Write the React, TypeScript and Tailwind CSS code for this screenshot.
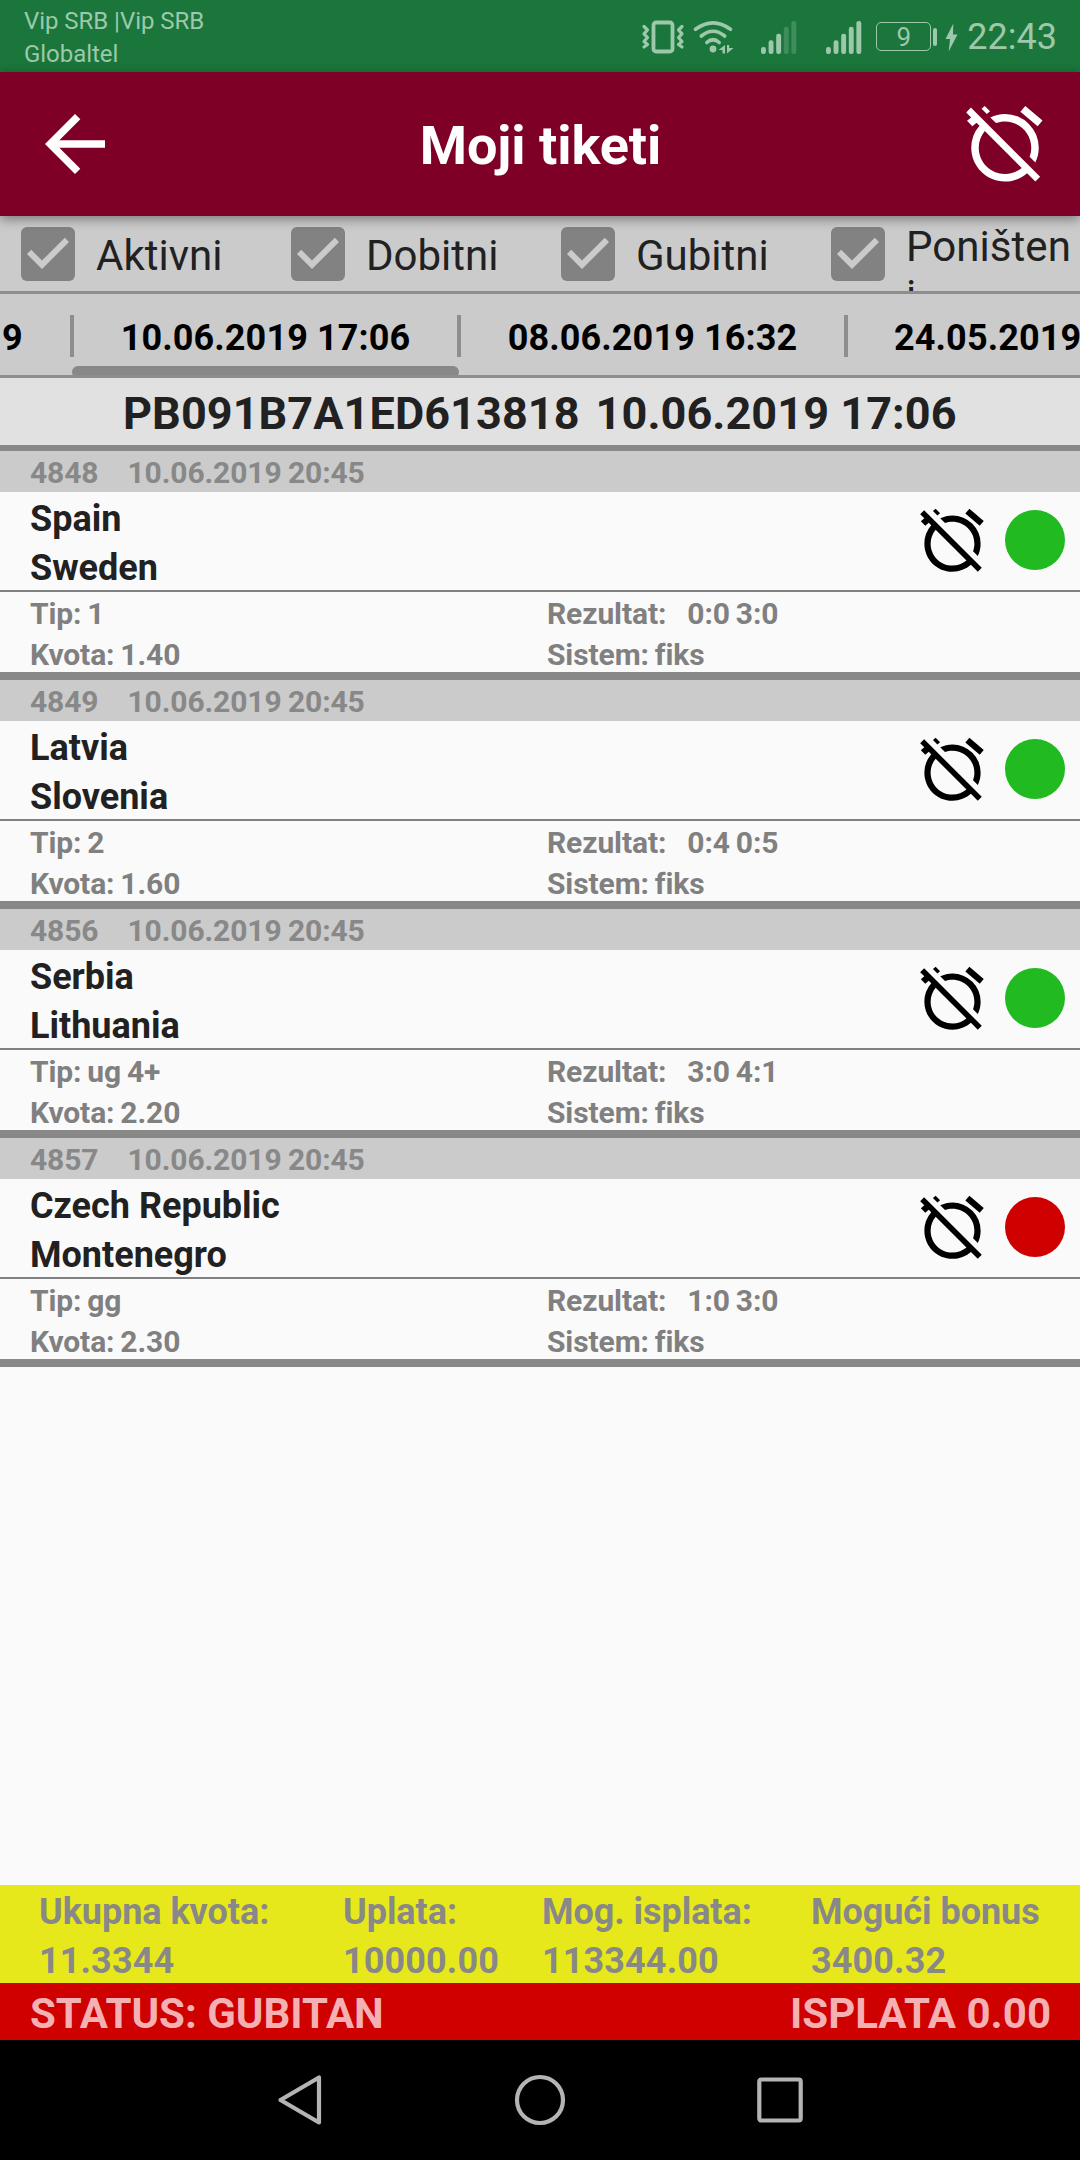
import { MdAlarmOff, MdArrowBack } from 'react-icons/md';

type Match = {
  code: string;
  home: string;
  away: string;
  tip: string;
  odds: string;
  result: string;
  won: boolean;
};

const matches: Match[] = [
  { code: '4848', home: 'Spain', away: 'Sweden', tip: '1', odds: '1.40', result: '0:0 3:0', won: true },
  { code: '4849', home: 'Latvia', away: 'Slovenia', tip: '2', odds: '1.60', result: '0:4 0:5', won: true },
  { code: '4856', home: 'Serbia', away: 'Lithuania', tip: 'ug 4+', odds: '2.20', result: '3:0 4:1', won: true },
  { code: '4857', home: 'Czech Republic', away: 'Montenegro', tip: 'gg', odds: '2.30', result: '1:0 3:0', won: false },
];

function VibrateIcon() {
  return (
    <svg width="44" height="36" viewBox="0 0 44 36" fill="none" stroke="currentColor">
      <rect x="12.5" y="3.5" width="19" height="29" rx="2.5" strokeWidth="3.8" />
      <path d="M3 7.500 6.500 11 3 14.800 6.500 18.500 3 22.500 6.500 25.500 3 28" strokeWidth="3.200" strokeLinecap="round" strokeLinejoin="round" />
      <path d="M41 7.500 37.500 11 41 14.800 37.500 18.500 41 22.500 37.500 25.500 41 28" strokeWidth="3.200" strokeLinecap="round" strokeLinejoin="round" />
    </svg>
  );
}

function WifiIcon() {
  return (
    <svg width="44" height="36" viewBox="0 0 44 36" fill="none" stroke="currentColor" strokeWidth="3.6" strokeLinecap="round">
      <path d="M3.500 10.300Q21 -2.500 38.500 10.300" />
      <path d="M9.300 17Q21 7.500 32.700 17" />
      <path d="M14.800 23.500Q21 18 27.200 23.500" />
      <circle cx="21" cy="30" r="3.400" fill="currentColor" stroke="none" />
      <path d="M33 26v8.500h-2.500V31H26.500zM35 34.500V26h2.200v3H41.500z" fill="currentColor" stroke="none" />
    </svg>
  );
}

function SignalIcon({ strength }: { strength: number }) {
  const tops = [28, 21.3, 14.7, 7.7, 2];
  return (
    <svg width="38" height="36" viewBox="0 0 38 36" fill="currentColor">
      {tops.map((top, i) => (
        <rect key={top} x={1 + i * 7.6} y={top} width="4.9" height={35 - top} rx="2.2" opacity={i < strength ? 1 : 0.28} />
      ))}
    </svg>
  );
}

function BatteryIcon() {
  return (
    <div className="flex items-center">
      <div className="flex h-[29px] w-[55px] items-center justify-center rounded-[5px] border-[1.5px] border-[#9dc8ab] text-[26px] leading-none">
        9
      </div>
      <div className="ml-[2px] h-[18px] w-[4px] rounded-full bg-[#9dc8ab]" />
    </div>
  );
}

function StatusBar() {
  return (
    <div className="flex h-[72px] bg-[#1a763b] pr-[23px] pl-[24px] text-[#9dc8ab]">
      <div className="pt-[5px] text-[24px] leading-[33px] tracking-[-0.050px]">
        Vip SRB |Vip SRB
        <br />
        Globaltel
      </div>
      <div className="ml-auto flex h-[73px] items-center">
        <VibrateIcon />
        <div className="ml-[7px]">
          <WifiIcon />
        </div>
        <div className="ml-[24px]">
          <SignalIcon strength={3} />
        </div>
        <div className="ml-[27px]">
          <SignalIcon strength={5} />
        </div>
        <div className="ml-[13px]">
          <BatteryIcon />
        </div>
        <svg className="ml-[7px]" width="16" height="30" viewBox="0 0 16 30" fill="currentColor">
          <path d="M9.300 1.500 1.500 17H6L4.700 29.500 13.500 12.500H9z" />
        </svg>
        <div className="ml-[7px] pt-px text-[36px] leading-[42px]">22:43</div>
      </div>
    </div>
  );
}

function Header() {
  return (
    <header className="relative z-10 flex h-[144px] items-center justify-between bg-[#7f0027] px-[30px] text-white shadow-[0_3px_11px_rgba(0,0,0,0.42)]">
      <MdArrowBack size={90} />
      <h1 className="pt-[2px] pl-px text-[54px] leading-[63px] font-bold tracking-[-0.050px]">Moji tiketi</h1>
      <MdAlarmOff size={90} />
    </header>
  );
}

function Filter({ label, wrapped }: { label: string; wrapped?: boolean }) {
  return (
    <div className="flex h-full w-[270px] overflow-hidden pl-[21px]">
      <div className="mt-[11px] flex h-[54px] w-[54px] shrink-0 rounded-[6px] bg-[#828282]">
        <svg width="54" height="54" viewBox="0 0 18 18" fill="#cbcbcb">
          <path d="M7 14 2 9l1.410-1.410L7 11.170l7.590-7.590L16 5z" />
        </svg>
      </div>
      <div
        className={
          wrapped
            ? 'ml-[21px] w-[168px] pt-[6px] text-[42px] leading-[49px] tracking-[0.060px] break-all text-[#212121]'
            : 'ml-[21px] pt-[15px] text-[42px] leading-[49px] text-[#212121]'
        }
      >
        {label}
      </div>
    </div>
  );
}

function Divider() {
  return <div className="-mx-[2px] mt-[21px] h-[42px] w-[4px] shrink-0 bg-[#8e8e8e]" />;
}

function DateTabs() {
  return (
    <div className="flex h-[84px] overflow-hidden border-b-[3px] border-[#8e8e8e] bg-[#cbcbcb] text-[36px] leading-[88px] font-bold tracking-[0.120px] whitespace-nowrap text-black">
      <div className="w-[72px] shrink-0 pl-[2px]">9</div>
      <Divider />
      <div className="relative w-[387px] shrink-0 text-center">
        10.06.2019 17:06
        <div className="absolute top-[72px] left-0 h-[12px] w-full rounded-[6px] bg-black/33" />
      </div>
      <Divider />
      <div className="w-[387px] shrink-0 text-center">08.06.2019 16:32</div>
      <Divider />
      <div className="shrink-0 pl-[48px]">24.05.2019</div>
    </div>
  );
}

function MatchRow({ match }: { match: Match }) {
  return (
    <div className="h-[229px] border-b-[8px] border-[#888888] font-bold">
      <div className="flex h-[41px] gap-[29px] bg-[#cbcbcb] pt-px pl-[30px] text-[30px] leading-[41px] tracking-[-0.100px] [word-spacing:-1px] text-[#888888]">
        <span>{match.code}</span>
        <span>10.06.2019 20:45</span>
      </div>
      <div className="flex h-[98px] items-center pr-[15px] pl-[30px]">
        <div className="h-[98px] grow pt-[3px] text-[36px] leading-[49px] text-[#212121]">
          <div>{match.home}</div>
          <div>{match.away}</div>
        </div>
        <div className="flex items-center pb-[2px]">
          <MdAlarmOff size={75} color="#000000" />
          <div className={match.won ? 'ml-[15px] size-[60px] rounded-full bg-[#21bb21]' : 'ml-[15px] size-[60px] rounded-full bg-[#ce0000]'} />
        </div>
      </div>
      <div className="grid h-[82px] grid-cols-[517px_1fr] border-t-2 border-[#808080] pt-px pl-[30px] text-[30px] leading-[41px] tracking-[-0.100px] [word-spacing:-1.500px] text-[#808080]">
        <div>
          <div>Tip: {match.tip}</div>
          <div>Kvota: {match.odds}</div>
        </div>
        <div>
          <div className="flex gap-[21px]">
            <span>Rezultat:</span>
            <span>{match.result}</span>
          </div>
          <div>Sistem: fiks</div>
        </div>
      </div>
    </div>
  );
}

function Total({ label, value }: { label: string; value: string }) {
  return (
    <div>
      <div className="tracking-[-0.050px]">{label}</div>
      <div className="tracking-[0.120px]">{value}</div>
    </div>
  );
}

function NavBar() {
  return (
    <div className="flex h-[120px] items-center justify-center gap-[180px] bg-black">
      <svg width="60" height="60" viewBox="0 0 60 60" fill="none" stroke="#b4b4b4" strokeWidth="4.200" strokeLinejoin="round">
        <path d="M49 7.500V52.500L10.500 30z" />
      </svg>
      <svg width="60" height="60" viewBox="0 0 60 60" fill="none" stroke="#b4b4b4" strokeWidth="4.200">
        <circle cx="30" cy="30" r="23" />
      </svg>
      <svg width="60" height="60" viewBox="0 0 60 60" fill="none" stroke="#b4b4b4" strokeWidth="4.200">
        <rect x="9.300" y="9.500" width="41.400" height="41" rx="2" />
      </svg>
    </div>
  );
}

export default function App() {
  return (
    <div className="flex h-[2160px] w-[1080px] flex-col overflow-hidden bg-[#fafafa] font-[Roboto,sans-serif]">
      <StatusBar />
      <Header />
      <div className="flex h-[78px] border-b-[3px] border-[#8e8e8e] bg-[#cbcbcb]">
        <Filter label="Aktivni" />
        <Filter label="Dobitni" />
        <Filter label="Gubitni" />
        <Filter label="Poništeni" wrapped />
      </div>
      <DateTabs />
      <div className="flex h-[73px] gap-[16px] border-b-[6px] border-[#888888] bg-[#e1e1e1] pt-[2px] pl-[123px] text-[45px] leading-[67px] font-bold tracking-[0.080px] text-[#212121]">
        <span>PB091B7A1ED613818</span>
        <span>10.06.2019 17:06</span>
      </div>
      <main className="grow">
        {matches.map((match) => (
          <MatchRow key={match.code} match={match} />
        ))}
      </main>
      <div className="grid h-[98px] grid-cols-[304px_199px_269px_1fr] bg-[#e7e81b] pt-[3px] pl-[39px] text-[36px] leading-[49px] font-bold text-[#888888]">
        <Total label="Ukupna kvota:" value="11.3344" />
        <Total label="Uplata:" value="10000.00" />
        <Total label="Mog. isplata:" value="113344.00" />
        <Total label="Mogući bonus" value="3400.32" />
      </div>
      <div className="flex h-[57px] justify-between bg-[#ce0000] pt-[2px] pr-[29px] pl-[30px] text-[42px] leading-[57px] font-bold text-[#f4b0b3]">
        <span>STATUS: GUBITAN</span>
        <span>ISPLATA 0.00</span>
      </div>
      <NavBar />
    </div>
  );
}
